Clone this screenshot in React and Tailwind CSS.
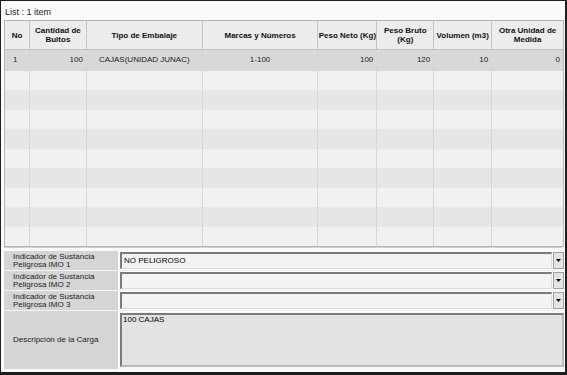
import React from "react";

const cols = [
  { w: 25, h: ["No"], v: "1", a: "text-left pl-[8px]" },
  { w: 57, h: ["Cantidad de", "Bultos"], v: "100", a: "text-right pr-[3px]" },
  { w: 116, h: ["Tipo de Embalaje"], v: "CAJAS(UNIDAD JUNAC)", a: "text-center" },
  { w: 116, h: ["Marcas y Números"], v: "1-100", a: "text-center" },
  { w: 59, h: ["Peso Neto (Kg)"], v: "100", a: "text-right pr-[3px]" },
  { w: 57, h: ["Peso Bruto", "(Kg)"], v: "120", a: "text-right pr-[3px]" },
  { w: 58, h: ["Volumen (m3)"], v: "10", a: "text-right pr-[3px]" },
  { w: 71, h: ["Otra Unidad de", "Medida"], v: "0", a: "text-right pr-[3px]" },
];

const rowHeights = [21, 19, 20, 19, 20, 19, 20, 19, 20, 19];
const rowBgs = ["bg-[#d8d8d8]", "bg-[#f1f1f1]", "bg-[#e6e6e6]", "bg-[#f1f1f1]", "bg-[#e6e6e6]", "bg-[#f1f1f1]", "bg-[#e6e6e6]", "bg-[#f1f1f1]", "bg-[#e6e6e6]", "bg-[#f1f1f1]"];

const font = { fontFamily: '"Liberation Sans Narrow", "Arial Narrow", "Liberation Sans", sans-serif' };

function Caret() {
  return (
    <div className="w-[11px] h-[17px] bg-[#e4e4e4] border border-[#a0a0a0] flex items-center justify-center">
      <svg width="5" height="3" viewBox="0 0 5 3"><path d="M0 0 L5 0 L2.5 3 Z" fill="#000" /></svg>
    </div>
  );
}

function SelectRow({ n, value }) {
  return (
    <div className="flex h-[20px] border-b border-[#f4f4f4]">
      <div className="w-[114px] bg-[#d5d5d5] pl-[9px] pt-[2px] text-[8px] leading-[8px] text-[#222]">
        <div>Indicador de Sustancia</div>
        <div>Peligrosa IMO {n}</div>
      </div>
      <div className="flex-1 flex items-center pl-[2px] gap-[1px]">
        <div className="flex-1 h-[17px] bg-[#f3f3f3] border-t-2 border-l-2 border-[#7a7a7a] border-b border-r border-b-[#dcdcdc] border-r-[#dcdcdc] pl-[2px] text-[8px] leading-[13px] text-black">
          {value}
        </div>
        <Caret />
      </div>
    </div>
  );
}

export default function App() {
  return (
    <div className="w-[567px] h-[375px] bg-[#fafafa] border-t border-l border-r-2 border-b-[3px] border-[#1e1e1e] flex flex-col text-[#111]" style={font}>
      <div className="h-[19px] pl-[4px] pt-[6px] text-[9px] leading-[10px] text-[#222]">List : 1 item</div>
      <div className="ml-[3px] w-[560px] border border-[#b4b4b4] bg-[#f3f3f3]">
        <div className="flex h-[29px] bg-[#ececec] border-b border-[#c2c2c2]">
          {cols.map((c, i) => (
            <div
              key={i}
              style={{ width: c.w }}
              className={`flex flex-col items-center justify-center text-[8px] leading-[9px] font-bold text-[#111] ${i < cols.length - 1 ? "border-r border-[#c4c4c4]" : ""}`}
            >
              {c.h.map((t) => (
                <div key={t}>{t}</div>
              ))}
            </div>
          ))}
        </div>
        {rowHeights.map((h, r) => (
          <div key={r} className={`flex ${rowBgs[r]}`} style={{ height: h }}>
            {cols.map((c, i) => (
              <div
                key={i}
                style={{ width: c.w }}
                className={`${c.a} text-[8px] leading-[19px] text-[#222] ${i < cols.length - 1 ? "border-r border-[#d6d6d6]" : ""}`}
              >
                {r === 0 ? c.v : ""}
              </div>
            ))}
          </div>
        ))}
      </div>
      <div className="h-[4px] mx-[3px] border-t border-[#d0d0d0]" />
      <div className="ml-[3px] w-[560px] flex flex-col">
        <SelectRow n={1} value="NO PELIGROSO" />
        <SelectRow n={2} value="" />
        <SelectRow n={3} value="" />
        <div className="flex h-[58px]">
          <div className="w-[114px] bg-[#d5d5d5] pl-[9px] flex items-center text-[8px] text-[#222]">
            Descripción de la Carga
          </div>
          <div className="flex-1 pl-[2px] pt-[2px]">
            <div className="h-[54px] bg-[#e3e3e3] border-t-2 border-l-2 border-[#7a7a7a] border-b-2 border-r-2 border-b-[#b8b8b8] border-r-[#b8b8b8] pl-[1px] text-[8px] leading-[9px] text-black">
              100 CAJAS
            </div>
          </div>
        </div>
      </div>
    </div>
  );
}
